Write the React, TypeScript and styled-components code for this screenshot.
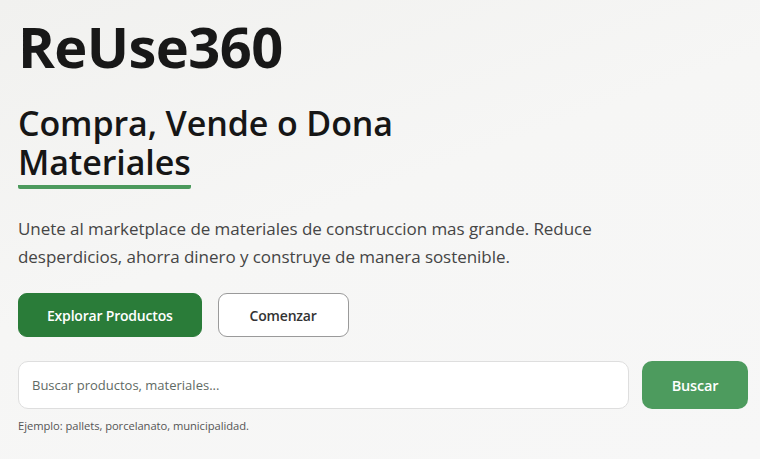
import React from "react";
import styled, { createGlobalStyle } from "styled-components";

const Global = createGlobalStyle`
  html, body { margin: 0; padding: 0; }
  body {
    background: linear-gradient(160deg, #f1f1ef 0%, #f6f6f5 45%, #f7f7f7 100%);
    font-family: "Open Sans", "Noto Sans", sans-serif;
    color: #1b1b1b;
    height: 459px;
    overflow: hidden;
  }
`;

const Hero = styled.section`
  padding: 13px 12px 0 18px;
  display: flex;
  flex-direction: column;
`;

const Brand = styled.h1`
  margin: 0;
  font-size: 56px;
  line-height: 66px;
  font-weight: 700;
  letter-spacing: -0.6px;
  color: #181818;
`;

const Headline = styled.h2`
  margin: 25px 0 0;
  font-size: 34px;
  line-height: 39px;
  font-weight: 600;
  letter-spacing: -0.1px;
  color: #161616;
`;

const HeadLine = styled.span`
  display: block;
`;

const Underlined = styled.span`
  display: inline-block;
  padding-bottom: 3px;
  border-bottom: 4px solid #4c9a5d;
  border-radius: 0 0 2px 2px;
`;

const Lead = styled.p`
  margin: 26px 0 0;
  max-width: 610px;
  font-size: 17px;
  line-height: 28px;
  color: #454545;
  letter-spacing: -0.05px;
`;

const Actions = styled.div`
  display: flex;
  gap: 16px;
  margin-top: 22px;
`;

const Button = styled.button<{ $variant: "primary" | "outline" }>`
  height: 44px;
  padding: 0 ${(p) => (p.$variant === "primary" ? "28px" : "31px")};
  border-radius: 9px;
  font-family: inherit;
  font-size: 14px;
  font-weight: 600;
  letter-spacing: -0.2px;
  cursor: pointer;
  background: ${(p) => (p.$variant === "primary" ? "#2a7c39" : "#ffffff")};
  color: ${(p) => (p.$variant === "primary" ? "#ffffff" : "#333333")};
  border: 1px solid ${(p) => (p.$variant === "primary" ? "#2a7c39" : "#9a9a9a")};
`;

const SearchRow = styled.form`
  display: flex;
  gap: 13px;
  margin-top: 24px;
`;

const SearchInput = styled.input`
  flex: 1;
  height: 48px;
  box-sizing: border-box;
  padding: 0 13px;
  border: 1px solid #dedede;
  border-radius: 10px;
  background: #ffffff;
  font-family: inherit;
  font-size: 13px;
  color: #333;
  outline: none;
  &::placeholder { color: #5f6a64; }
`;

const SearchButton = styled.button`
  width: 106px;
  height: 48px;
  border: none;
  border-radius: 10px;
  background: #4d9b5e;
  color: #ffffff;
  font-family: inherit;
  font-size: 14.5px;
  font-weight: 600;
  letter-spacing: -0.2px;
`;

const Hint = styled.p`
  margin: 9px 0 0;
  font-size: 11.2px;
  line-height: 15px;
  color: #555555;
  letter-spacing: -0.05px;
`;

export default function App() {
  return (
    <>
      <Global />
      <Hero>
        <Brand>ReUse360</Brand>
        <Headline>
          <HeadLine>Compra, Vende o Dona</HeadLine>
          <Underlined>Materiales</Underlined>
        </Headline>
        <Lead>
          Unete al marketplace de materiales de construccion mas grande. Reduce
          desperdicios, ahorra dinero y construye de manera sostenible.
        </Lead>
        <Actions>
          <Button $variant="primary">Explorar Productos</Button>
          <Button $variant="outline">Comenzar</Button>
        </Actions>
        <SearchRow onSubmit={(e) => e.preventDefault()}>
          <SearchInput placeholder="Buscar productos, materiales..." />
          <SearchButton type="submit">Buscar</SearchButton>
        </SearchRow>
        <Hint>Ejemplo: pallets, porcelanato, municipalidad.</Hint>
      </Hero>
    </>
  );
}
